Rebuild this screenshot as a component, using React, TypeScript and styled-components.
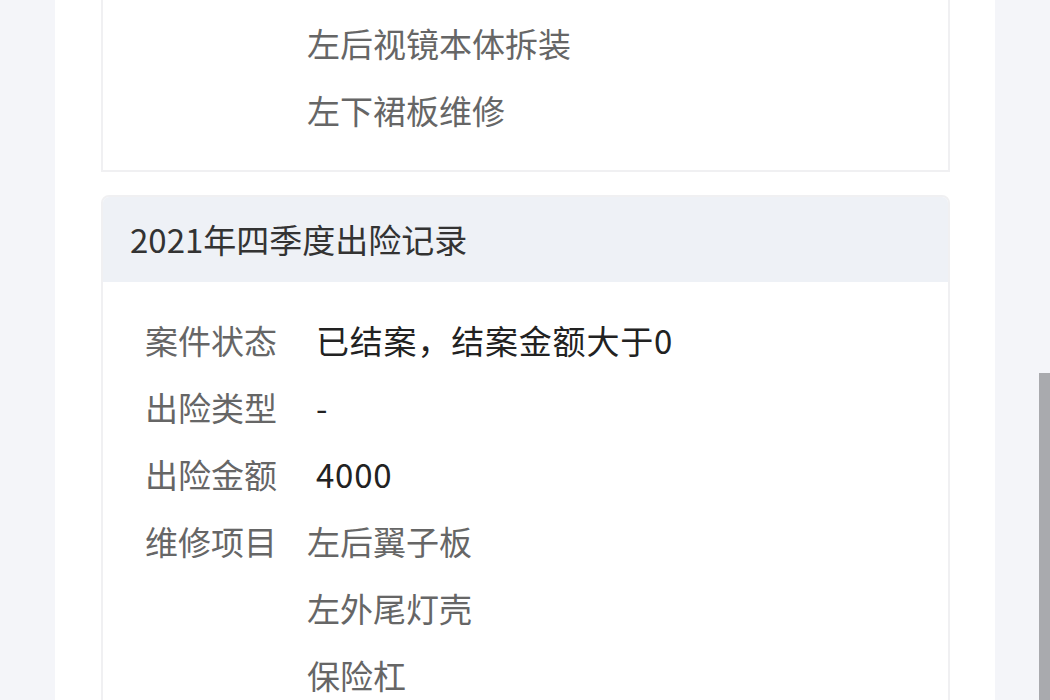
import styled, { createGlobalStyle } from "styled-components"

const GlobalStyle = createGlobalStyle`
  html, body {
    margin: 0;
    padding: 0;
    background: #f4f5f9;
    font-family: "Noto Sans CJK SC", "Noto Sans", sans-serif;
  }
`

type Row = { label: string; values: string[]; strong?: boolean }

const records: Row[] = [
  { label: "案件状态", values: ["已结案，结案金额大于0"], strong: true },
  { label: "出险类型", values: ["-"], strong: true },
  { label: "出险金额", values: ["4000"], strong: true },
  { label: "维修项目", values: ["左后翼子板", "左外尾灯壳", "保险杠"] },
]

export default function App() {
  return (
    <>
      <GlobalStyle />
      <Page>
        <Panel>
          <Card $first>
            <CardBody>
              <InfoRow>
                <Label />
                <Values>
                  <Value>左后视镜本体拆装</Value>
                  <Value>左下裙板维修</Value>
                </Values>
              </InfoRow>
            </CardBody>
          </Card>
          <Card>
            <CardHeader>2021年四季度出险记录</CardHeader>
            <CardBody>
              {records.map((r) => (
                <InfoRow key={r.label}>
                  <Label>{r.label}</Label>
                  <Values>
                    {r.values.map((v) => (
                      <Value key={v} $strong={r.strong}>{v}</Value>
                    ))}
                  </Values>
                </InfoRow>
              ))}
            </CardBody>
          </Card>
        </Panel>
        <ScrollThumb />
      </Page>
    </>
  )
}

const Page = styled.div`
  position: relative;
  height: 700px;
  overflow: hidden;
  display: flex;
  justify-content: center;
`

const Panel = styled.main`
  width: 940px;
  background: #ffffff;
  padding: 0 45px 0 46px;
  box-sizing: border-box;
  display: flex;
  flex-direction: column;
  gap: 23px;
`

const Card = styled.section<{ $first?: boolean }>`
  border: 2px solid #f0f0f2;
  border-radius: ${(p) => (p.$first ? "0" : "8px 8px 0 0")};
  margin-top: ${(p) => (p.$first ? "-17px" : "0")};
  background: #fff;
  overflow: hidden;
  flex-shrink: 0;
`

const CardHeader = styled.header`
  height: 87px;
  display: flex;
  align-items: center;
  background: #eef1f6;
  color: #333;
  font-size: 33px;
  margin: -2px -2px 0 -2px;
  padding-left: 29px;
`

const CardBody = styled.div`
  padding: 25px 0 26px 42px;
`

const InfoRow = styled.div`
  display: flex;
  align-items: flex-start;
`

const Label = styled.div`
  width: 162px;
  flex-shrink: 0;
  color: #666;
  font-size: 33px;
  line-height: 67px;
`

const Values = styled.div`
  display: flex;
  flex-direction: column;
`

const Value = styled.div<{ $strong?: boolean }>`
  font-size: 33px;
  line-height: 67px;
  color: ${(p) => (p.$strong ? "#222" : "#666")};
  padding-left: ${(p) => (p.$strong ? "9px" : "0")};
  letter-spacing: ${(p) => (p.$strong ? "0.8px" : "0")};
`

const ScrollThumb = styled.div`
  position: absolute;
  right: 0;
  top: 373px;
  width: 11px;
  bottom: 0;
  background: #a9aaae;
`
